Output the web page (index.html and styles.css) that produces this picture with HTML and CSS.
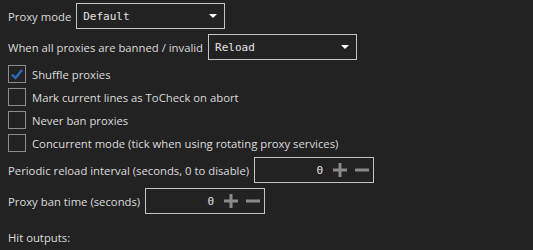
FILE: index.html
```html
<!DOCTYPE html>
<html>
<head>
<meta charset="utf-8">
<link rel="stylesheet" href="styles.css">
</head>
<body>
<div class="panel">
  <div class="row">
    <span class="label">Proxy mode</span>
    <div class="select sel-mode"><span class="val">Default</span><span class="arrow"></span></div>
  </div>
  <div class="row">
    <span class="label">When all proxies are banned / invalid</span>
    <div class="select sel-ban"><span class="val">Reload</span><span class="arrow"></span></div>
  </div>
  <div class="check">
    <span class="box checked"><svg width="16" height="16" viewBox="0 0 16 16"><path d="M3 8.5 L6.5 12 L13 4" fill="none" stroke="#2a6cbf" stroke-width="2.4"/></svg></span>
    <span class="label">Shuffle proxies</span>
  </div>
  <div class="check">
    <span class="box"></span>
    <span class="label">Mark current lines as ToCheck on abort</span>
  </div>
  <div class="check">
    <span class="box"></span>
    <span class="label">Never ban proxies</span>
  </div>
  <div class="check">
    <span class="box"></span>
    <span class="label">Concurrent mode (tick when using rotating proxy services)</span>
  </div>
  <div class="row">
    <span class="label">Periodic reload interval (seconds, 0 to disable)</span>
    <div class="num">
      <span class="nval">0</span>
      <svg class="icon" width="14" height="14" viewBox="0 0 14 14"><path d="M0 7H14M7 0V14" stroke="#8a8a8a" stroke-width="3"/></svg>
      <svg class="icon" width="14" height="14" viewBox="0 0 14 14"><path d="M0 7H14" stroke="#8a8a8a" stroke-width="3"/></svg>
    </div>
  </div>
  <div class="row">
    <span class="label">Proxy ban time (seconds)</span>
    <div class="num">
      <span class="nval">0</span>
      <svg class="icon" width="14" height="14" viewBox="0 0 14 14"><path d="M0 7H14M7 0V14" stroke="#8a8a8a" stroke-width="3"/></svg>
      <svg class="icon" width="14" height="14" viewBox="0 0 14 14"><path d="M0 7H14" stroke="#8a8a8a" stroke-width="3"/></svg>
    </div>
  </div>
  <div class="hits label">Hit outputs:</div>
</div>
</body>
</html>
```

FILE: styles.css
```css
html, body {
  margin: 0;
  padding: 0;
  background: #222222;
  height: 100%;
  overflow: hidden;
}
.panel {
  padding: 3px 8px 0 8px;
  display: flex;
  flex-direction: column;
  gap: 5px;
  font-family: "Open Sans", "Noto Sans", sans-serif;
  font-size: 11.3px;
  color: #dcdcdc;
}
.row {
  display: flex;
  align-items: center;
  gap: 5px;
  height: 26px;
}
.label {
  white-space: nowrap;
}
.select {
  box-sizing: border-box;
  height: 26px;
  border: 1px solid #c4c4c4;
  display: flex;
  align-items: center;
  justify-content: space-between;
  padding: 0 7px 0 6px;
  font-family: "DejaVu Sans Mono", monospace;
  font-size: 11px;
  color: #e4e4e4;
}
.sel-mode { width: 149px; }
.sel-ban { width: 149px; }
.arrow {
  width: 0;
  height: 0;
  border-left: 4px solid transparent;
  border-right: 4px solid transparent;
  border-top: 4px solid #ffffff;
}
.check {
  display: flex;
  align-items: center;
  gap: 6px;
  height: 18px;
}
.box {
  box-sizing: border-box;
  width: 18px;
  height: 18px;
  border: 1px solid #8c8c8c;
  display: flex;
  align-items: center;
  justify-content: center;
}
.num {
  box-sizing: border-box;
  width: 120px;
  height: 26px;
  border: 1px solid #c4c4c4;
  display: flex;
  align-items: center;
  justify-content: flex-end;
  gap: 8px;
  padding-right: 4px;
}
.nval {
  font-family: "DejaVu Sans Mono", monospace;
  font-size: 11px;
  color: #e4e4e4;
  margin-right: 2px;
}
.icon {
  display: block;
}
.hits {
  margin-top: 11px;
}
```
